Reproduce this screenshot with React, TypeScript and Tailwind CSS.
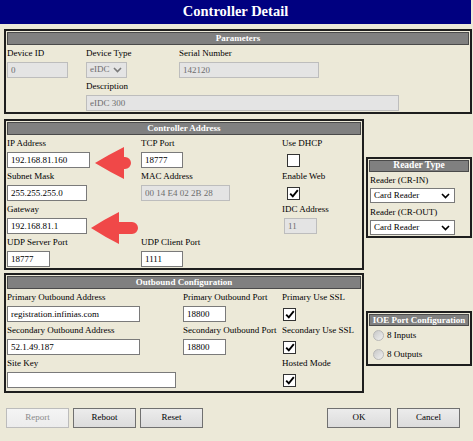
import React from 'react';

const Header = ({ title, className = '' }: { title: string; className?: string }) => (
  <div
    className={`bg-[#808080] border border-[#4a4a4a] text-white font-bold flex items-center justify-center leading-none whitespace-nowrap ${className}`}
  >
    {title}
  </div>
);

const Field = ({ label, children }: { label?: string; children?: React.ReactNode }) => (
  <div>
    <div className="h-[16px] leading-[16px] whitespace-nowrap">{label}</div>
    <div className="mt-[1px] h-[16px] flex items-center">{children}</div>
  </div>
);

const TextBox = ({ value, w, disabled }: { value: string; w: string; disabled?: boolean }) => (
  <input
    readOnly
    value={value}
    className={`h-[16px] border px-[3px] outline-none ${w} ${
      disabled ? 'bg-[#e4e4e4] border-[#bdbdbd] text-[#6d6d6d]' : 'bg-white border-[#7a7a7a] text-black'
    }`}
  />
);

const Chevron = ({ color }: { color: string }) => (
  <svg width="9" height="6" viewBox="0 0 9 6">
    <polyline points="1,1 4.5,4.6 8,1" fill="none" stroke={color} strokeWidth="1.6" />
  </svg>
);

const Check = ({ checked, className = '' }: { checked?: boolean; className?: string }) => (
  <span className={`w-[13px] h-[13px] border border-[#333] bg-white flex items-center justify-center ${className}`}>
    {checked && (
      <svg width="10" height="9" viewBox="0 0 10 9">
        <path d="M1.2 4.6 L3.8 7.4 L8.8 1.2" fill="none" stroke="#000" strokeWidth="1.9" />
      </svg>
    )}
  </span>
);

const ReaderSelect = () => (
  <div className="h-[15px] w-[85px] border border-[#7a7a7a] bg-white flex items-center justify-between pl-[3px] pr-[4px]">
    <span>Card Reader</span>
    <Chevron color="#000" />
  </div>
);

const Radio = ({ label }: { label: string }) => (
  <div className="h-[19px] flex items-center pl-[4px] gap-[3px]">
    <span className="w-[11px] h-[11px] rounded-full border border-[#b8b8b8] bg-linear-to-br from-[#c8c8c8] to-[#f0f0f0]" />
    <span>{label}</span>
  </div>
);

const Btn = ({ label, disabled, className = '' }: { label: string; disabled?: boolean; className?: string }) => (
  <button
    className={`h-[20px] border bg-linear-to-b ${
      disabled
        ? 'border-[#bcbcbc] from-[#f4f4f4] to-[#ececec] text-[#8a8a8a]'
        : 'border-[#707070] from-[#ececec] to-[#dcdcdc] text-black'
    } ${className}`}
  >
    {label}
  </button>
);

export default function App() {
  return (
    <div className="relative w-[473px] h-[441px] bg-[#ECE9D8] font-['Liberation_Serif',serif] text-[9px] text-black overflow-hidden">
      <div className="w-[471px] h-[24px] bg-[#000080] text-white font-bold text-[14.5px] flex items-center justify-center">
        Controller Detail
      </div>

      {/* Parameters */}
      <div className="ml-[4px] mt-[5px] w-[468px] border-2 border-[#1e1e1e] p-[1px]">
        <Header title="Parameters" className="h-[13px]" />
        <div className="grid grid-cols-[79px_93px_1fr]">
          <Field label="Device ID">
            <TextBox value="0" w="w-[61px]" disabled />
          </Field>
          <Field label="Device Type">
            <div className="h-[16px] w-[41px] border border-[#bdbdbd] bg-[#e4e4e4] text-[#6d6d6d] flex items-center justify-between pl-[3px] pr-[4px]">
              <span>eIDC</span>
              <Chevron color="#7a7a7a" />
            </div>
          </Field>
          <Field label="Serial Number">
            <TextBox value="142120" w="w-[140px]" disabled />
          </Field>
          <div />
          <div className="col-span-2">
            <Field label="Description">
              <TextBox value="eIDC 300" w="w-[313px]" disabled />
            </Field>
          </div>
        </div>
      </div>

      {/* Controller Address + Reader Type */}
      <div className="flex items-start ml-[4px] mt-[5px]">
        <div className="w-[360px] border-2 border-[#1e1e1e] p-[1px]">
          <Header title="Controller Address" className="h-[13px]" />
          <div className="grid grid-cols-[134px_141px_1fr]">
            <Field label="IP Address">
              <TextBox value="192.168.81.160" w="w-[83px]" />
            </Field>
            <Field label="TCP Port">
              <TextBox value="18777" w="w-[42px]" />
            </Field>
            <Field label="Use DHCP">
              <Check className="ml-[5px]" />
            </Field>
            <Field label="Subnet Mask">
              <TextBox value="255.255.255.0" w="w-[80px]" />
            </Field>
            <Field label="MAC Address">
              <TextBox value="00 14 E4 02 2B 28" w="w-[89px]" disabled />
            </Field>
            <Field label="Enable Web">
              <Check checked className="ml-[5px]" />
            </Field>
            <Field label="Gateway">
              <TextBox value="192.168.81.1" w="w-[80px]" />
            </Field>
            <div />
            <Field label="IDC Address">
              <TextBox value="11" w="w-[33px] ml-[2px]" disabled />
            </Field>
            <Field label="UDP Server Port">
              <TextBox value="18777" w="w-[43px]" />
            </Field>
            <Field label="UDP Client Port">
              <TextBox value="1111" w="w-[42px]" />
            </Field>
            <div />
          </div>
        </div>

        <div className="ml-[2px] mt-[38px] w-[106px] border-2 border-[#1e1e1e] p-[1px]">
          <Header title="Reader Type" className="h-[12px] text-[9.5px]" />
          <div className="pl-[1px]">
            <div className="h-[16px] leading-[16px]">Reader (CR-IN)</div>
            <ReaderSelect />
            <div className="h-[16px] leading-[16px] mt-[1px]">Reader (CR-OUT)</div>
            <ReaderSelect />
          </div>
        </div>
      </div>

      {/* Outbound Configuration + IOE */}
      <div className="flex items-start ml-[4px] mt-[3px]">
        <div className="w-[360px] border-2 border-[#1e1e1e] p-[1px] pb-[3px]">
          <Header title="Outbound Configuration" className="h-[13px]" />
          <div className="grid grid-cols-[176px_99px_1fr]">
            <Field label="Primary Outbound Address">
              <TextBox value="registration.infinias.com" w="w-[133px]" />
            </Field>
            <Field label="Primary Outbound Port">
              <TextBox value="18800" w="w-[43px]" />
            </Field>
            <Field label="Primary Use SSL">
              <Check checked className="ml-[1px]" />
            </Field>
            <Field label="Secondary Outbound Address">
              <TextBox value="52.1.49.187" w="w-[133px]" />
            </Field>
            <Field label="Secondary Outbound Port">
              <TextBox value="18800" w="w-[43px]" />
            </Field>
            <Field label="Secondary Use SSL">
              <Check checked className="ml-[1px]" />
            </Field>
            <div className="col-span-2">
              <Field label="Site Key">
                <TextBox value="" w="w-[169px]" />
              </Field>
            </div>
            <Field label="Hosted Mode">
              <Check checked className="ml-[1px]" />
            </Field>
          </div>
        </div>

        <div className="ml-[2px] mt-[38px] w-[106px] border-2 border-[#1e1e1e] p-[1px] pb-0">
          <Header title="IOE Port Configuration" className="h-[12px]" />
          <Radio label="8 Inputs" />
          <Radio label="8 Outputs" />
        </div>
      </div>

      {/* Buttons */}
      <div className="flex items-center pl-[6px] mt-[15px]">
        <Btn label="Report" disabled className="w-[63px]" />
        <Btn label="Reboot" className="w-[63px] ml-[4px]" />
        <Btn label="Reset" className="w-[63px] ml-[4px]" />
        <Btn label="OK" className="w-[64px] ml-[124px]" />
        <Btn label="Cancel" className="w-[63px] ml-[6px]" />
      </div>

      {/* callout arrows */}
      <svg className="absolute left-0 top-0 pointer-events-none" width="473" height="441" viewBox="0 0 473 441">
        <path
          d="M95 163 Q110 154 124 147 L124 157 L125 157 A6 6 0 0 1 125 169 L124 169 L124 179 Q110 172 95 163 Z"
          fill="#f04848"
        />
        <path
          d="M91 228 Q105 219 119 212 L119 222 L132 222 A6 6 0 0 1 132 234 L119 234 L119 244 Q105 237 91 228 Z"
          fill="#f04848"
        />
      </svg>
    </div>
  );
}
